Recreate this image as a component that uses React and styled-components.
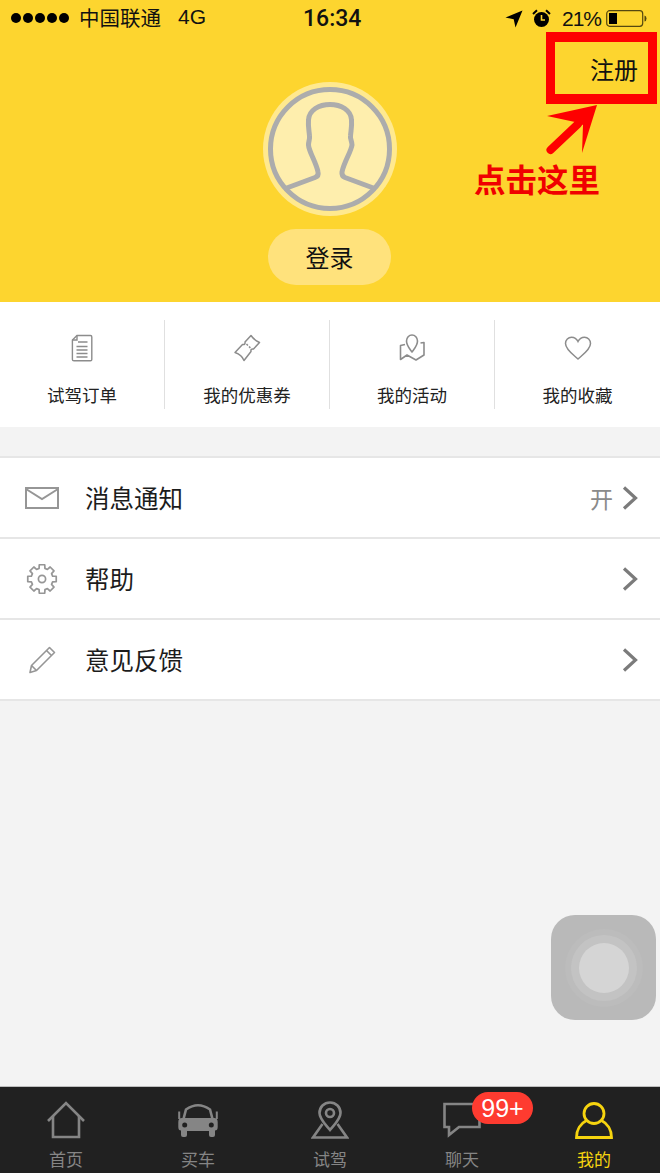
import React from 'react';
import styled, { createGlobalStyle } from 'styled-components';

const GlobalStyle = createGlobalStyle`
  html, body {
    margin: 0;
    padding: 0;
    background: #f3f3f3;
    font-family: "Liberation Sans", "Noto Sans CJK SC", sans-serif;
  }
`;

const Page = styled.div`
  position: relative;
  width: 660px;
  height: 1173px;
  display: flex;
  flex-direction: column;
  overflow: hidden;
  background: #f3f3f3;
`;

const Hero = styled.header`
  height: 302px;
  flex: none;
  background: #fdd52f;
  display: flex;
  flex-direction: column;
  align-items: center;
`;

const StatusBar = styled.div`
  align-self: stretch;
  height: 37px;
  display: grid;
  grid-template-columns: 292px auto 1fr;
  align-items: center;
  padding: 0 13px 0 11px;
  color: #111;
  font-size: 21px;
`;

const StatusLeft = styled.div`
  display: flex;
  align-items: center;
  margin-top: -3px;
`;

const Dots = styled.div`
  display: flex;
  gap: 2px;
  margin: 2px 10px 0 0;
`;

const Dot = styled.span`
  width: 10px;
  height: 10px;
  border-radius: 50%;
  background: #000;
`;

const Carrier = styled.span`
  font-size: 20.5px;
  margin-right: 17px;
`;

const Clock = styled.div`
  font-family: Roboto, "Liberation Sans", sans-serif;
  font-size: 23px;
  font-weight: 500;
`;

const StatusRight = styled.div`
  display: flex;
  align-items: center;
  justify-content: flex-end;
`;

const Percent = styled.span`
  margin: 0 5px 0 11px;
  letter-spacing: -1px;
`;

const NavRow = styled.div`
  align-self: stretch;
  height: 45px;
  display: flex;
  justify-content: flex-end;
  padding: 19px 22px 0 0;
  box-sizing: border-box;
`;

const RegisterLink = styled.span`
  font-size: 24px;
  line-height: 30px;
  color: #111;
`;

const Avatar = styled.div`
  width: 134px;
  height: 134px;
  flex: none;
`;

const LoginButton = styled.div`
  width: 123px;
  height: 56px;
  margin: 13px 1px 0 0;
  padding-bottom: 2px;
  box-sizing: border-box;
  border-radius: 28px;
  background: #ffe27c;
  color: #111;
  font-size: 24px;
  display: flex;
  align-items: center;
  justify-content: center;
`;

const Shortcuts = styled.nav`
  height: 125px;
  flex: none;
  background: #fff;
  display: grid;
  grid-template-columns: repeat(4, 1fr);
  align-items: start;
  padding-top: 18px;
  box-sizing: border-box;
`;

const Shortcut = styled.div`
  height: 89px;
  display: flex;
  flex-direction: column;
  align-items: center;
  padding-top: 14px;
  box-sizing: border-box;
  border-right: ${p => (p.$last ? 'none' : '1px solid #e0e0e0')};
`;

const ShortcutIcon = styled.div`
  height: 28px;
  display: flex;
  align-items: center;
  justify-content: center;
`;

const ShortcutLabel = styled.span`
  margin-top: 22px;
  font-size: 17.5px;
  line-height: 24px;
  color: #222;
`;

const Menu = styled.section`
  margin-top: 29px;
  background: #fff;
  border-top: 2px solid #e6e6e6;
`;

const MenuRow = styled.div`
  height: 79px;
  display: flex;
  align-items: center;
  padding: 0 22px 0 25px;
  border-bottom: 2px solid #e6e6e6;
`;

const MenuIcon = styled.div`
  width: 34px;
  margin-right: 26px;
  display: flex;
  align-items: center;
  justify-content: center;
`;

const MenuLabel = styled.span`
  flex: 1;
  font-size: 24.5px;
  color: #1c1c1c;
`;

const MenuValue = styled.span`
  font-size: 23px;
  color: #8a8a8a;
  margin-right: 9px;
`;

const Spacer = styled.div`
  flex: 1;
`;

const TabBar = styled.footer`
  height: 87px;
  flex: none;
  background: #212121;
  border-top: 1px solid #bdbdbd;
  box-sizing: border-box;
  display: grid;
  grid-template-columns: repeat(5, 1fr);
  overflow: hidden;
`;

const Tab = styled.div`
  position: relative;
  display: flex;
  flex-direction: column;
  align-items: center;
  padding-top: 14px;
  color: ${p => (p.$active ? '#f6d40f' : '#858585')};
`;

const TabIcon = styled.div`
  height: 38px;
  display: flex;
  align-items: center;
  justify-content: center;
`;

const TabLabel = styled.span`
  margin-top: 9px;
  font-size: 17px;
  line-height: 26px;
`;

const Badge = styled.span`
  position: absolute;
  left: 76px;
  top: 5px;
  width: 61px;
  height: 32px;
  border-radius: 16px;
  background: #fe3b30;
  color: #fff;
  font-size: 25px;
  display: flex;
  align-items: center;
  justify-content: center;
`;

const RedBox = styled.div`
  position: absolute;
  left: 546px;
  top: 32px;
  width: 111px;
  height: 72px;
  box-sizing: border-box;
  border-style: solid;
  border-color: #fe0000;
  border-width: 10px 9px;
`;

const ArrowMark = styled.svg`
  position: absolute;
  left: 540px;
  top: 100px;
`;

const ClickHint = styled.span`
  position: absolute;
  left: 474px;
  top: 161px;
  font-size: 31.5px;
  line-height: 40px;
  font-weight: 700;
  color: #f00000;
  white-space: nowrap;
`;

const AssistiveTouch = styled.div`
  position: absolute;
  left: 551px;
  top: 915px;
  width: 105px;
  height: 105px;
  border-radius: 24px;
  background: #b9b9b9;
  display: flex;
  align-items: center;
  justify-content: center;
`;

const Ring = styled.div`
  width: ${p => p.$size}px;
  height: ${p => p.$size}px;
  border-radius: 50%;
  background: ${p => p.$color};
  display: flex;
  align-items: center;
  justify-content: center;
`;

const gray = '#8c8c8c';

// blocky 8 tooth gear, same shape as the one in the help row
function gearPath(cx, cy, inner, outer) {
  const pts = [];
  for (let i = 0; i < 8; i++) {
    const a = (i * Math.PI) / 4 - Math.PI / 2;
    [[inner, -0.27], [outer, -0.19], [outer, 0.19], [inner, 0.27]].forEach(([r, d]) => {
      pts.push(`${(cx + r * Math.cos(a + d)).toFixed(2)} ${(cy + r * Math.sin(a + d)).toFixed(2)}`);
    });
  }
  return `M${pts.join('L')}Z`;
}

const shortcuts = [
  {
    label: '试驾订单',
    icon: (
      <svg width="22" height="28" viewBox="0 0 22 28" fill="none" stroke={gray} strokeWidth="1.4">
        <path d="M6 1.5H19.5Q20.8 1.5 20.8 3V25.5Q20.8 26.8 19.5 26.8H3Q1.4 26.8 1.4 25.5V6Z" />
        <path d="M6 1.5V6H1.4M7 8H16.5M5.5 12.5H16.5M5.5 16H16.5M5.5 19.5H16.5M5.5 23H16.5" />
      </svg>
    ),
  },
  {
    label: '我的优惠券',
    icon: (
      <svg width="28" height="28" viewBox="0 0 28 28" fill="none" stroke={gray} strokeWidth="1.5" strokeLinejoin="round">
        <path d="M18 1.5Q21 6 26.5 8.5L20.5 15Q17.5 14.5 18 17.5L11 26.5Q9 21 2 18.5L9.5 10.5Q12.5 11 12 8Z" />
        <path d="M13.5 10L18 14.5" strokeDasharray="2 1.5" />
      </svg>
    ),
  },
  {
    label: '我的活动',
    icon: (
      <svg width="30" height="28" viewBox="0 0 30 28" fill="none" stroke={gray} strokeWidth="1.6" strokeLinejoin="round">
        <path d="M15 18C12.5 14.5 9.5 11.5 9.5 7C9.5 3.5 12 1 15 1C18 1 20.5 3.5 20.5 7C20.5 11.5 17.5 14.5 15 18Z" />
        <path d="M8 10.5L3.5 11.5V25.5L10 21L19 26L27 21V8.5L23.5 9" />
      </svg>
    ),
  },
  {
    label: '我的收藏',
    icon: (
      <svg width="28" height="24" viewBox="0 0 28 24" fill="none" stroke={gray} strokeWidth="1.5">
        <path d="M14 23C9 18.5 1.5 13.5 1.5 7.5C1.5 3.8 4.3 1.2 7.5 1.2C10.3 1.2 12.8 3 14 5.5C15.2 3 17.7 1.2 20.5 1.2C23.7 1.2 26.5 3.8 26.5 7.5C26.5 13.5 19 18.5 14 23Z" />
      </svg>
    ),
  },
];

const Chevron = () => (
  <svg width="16" height="24" viewBox="0 0 16 24" fill="none" stroke="#7b7b7b" strokeWidth="3.2">
    <path d="M2 1.5L13.5 12L2 22.5" />
  </svg>
);

const menuItems = [
  {
    label: '消息通知',
    value: '开',
    icon: (
      <svg width="34" height="22" viewBox="0 0 34 22" fill="none" stroke="#969696" strokeWidth="2">
        <rect x="1" y="1" width="32" height="20" />
        <path d="M1 2L17 12L33 2" />
      </svg>
    ),
  },
  {
    label: '帮助',
    icon: (
      <svg width="32" height="32" viewBox="0 0 32 32" fill="none" stroke="#969696" strokeWidth="1.7" strokeLinejoin="round">
        <path d={gearPath(16, 16, 11, 14.5)} />
        <circle cx="16" cy="16" r="3.6" />
      </svg>
    ),
  },
  {
    label: '意见反馈',
    icon: (
      <svg width="28" height="28" viewBox="0 0 28 28" fill="none" stroke="#969696" strokeWidth="1.6" strokeLinejoin="round">
        <path d="M21.5 1.5L26.5 6.5L8.5 24.5L2 26.5L3.5 19.5Z" />
        <path d="M18.5 4.5L23.5 9.5M3.5 19.5L8.5 24.5" />
      </svg>
    ),
  },
];

const tabs = [
  {
    label: '首页',
    icon: (
      <svg width="40" height="38" viewBox="0 0 40 38" fill="none" stroke="currentColor" strokeWidth="2.6">
        <path d="M2 20L20 2L38 20" />
        <path d="M7 15V36H33V15" />
      </svg>
    ),
  },
  {
    label: '买车',
    icon: (
      <svg width="42" height="36" viewBox="0 0 42 36" fill="none">
        <path d="M6.5 17L9 7.5Q21 -1 33 7.5L35.5 17" stroke="currentColor" strokeWidth="2.6" />
        <path d="M2.2 9.5V17M39.8 9.5V17" stroke="currentColor" strokeWidth="2" />
        <path d="M1.3 20Q1.3 16 5 16H37Q40.7 16 40.7 20V25Q40.7 28.5 38 28.5V33Q38 35 36 35H34Q32 35 32 33V29H10V33Q10 35 8 35H6Q4 35 4 33V28.5Q1.3 28.5 1.3 25Z" fill="currentColor" />
        <circle cx="7.7" cy="23" r="2.5" fill="#212121" />
        <circle cx="34.3" cy="23" r="2.5" fill="#212121" />
      </svg>
    ),
  },
  {
    label: '试驾',
    icon: (
      <svg width="38" height="38" viewBox="0 0 38 38" fill="none" stroke="currentColor" strokeWidth="2.6">
        <path d="M19 29C14 23 8.5 18 8.5 12C8.5 6 13 1.5 19 1.5C25 1.5 29.5 6 29.5 12C29.5 18 24 23 19 29Z" />
        <circle cx="19" cy="12" r="4" />
        <path d="M11.5 23L2 36.5H36L26.5 23" />
      </svg>
    ),
  },
  {
    label: '聊天',
    badge: '99+',
    icon: (
      <svg width="38" height="36" viewBox="0 0 38 36" fill="none" stroke="currentColor" strokeWidth="2.6">
        <path d="M1.5 2H36.5V25H16L6 33V25H1.5Z" />
      </svg>
    ),
  },
  {
    label: '我的',
    active: true,
    icon: (
      <svg width="38" height="37" viewBox="0 0 38 37" fill="none" stroke="currentColor" strokeWidth="2.8">
        <circle cx="19" cy="11.5" r="10" />
        <path d="M11.5 18.5C5.5 21.5 1.5 28 1.5 35.5H36.5C36.5 28 32.5 21.5 26.5 18.5" />
      </svg>
    ),
  },
];

function StatusIcons() {
  return (
    <>
      <svg width="18" height="18" viewBox="0 0 18 18" style={{ marginRight: 9 }}>
        <path d="M17.5 0.5L10.5 17.5L8.7 9.3L0.5 7.5Z" fill="#000" />
      </svg>
      <svg width="19" height="19" viewBox="0 0 19 19">
        <circle cx="9.5" cy="10.5" r="7.5" fill="#000" />
        <path d="M9.5 6V11H13" fill="none" stroke="#fdd52f" strokeWidth="1.6" />
        <path d="M1 5L5 1.2M18 5L14 1.2" stroke="#000" strokeWidth="2" />
      </svg>
    </>
  );
}

function Battery() {
  return (
    <svg width="41" height="17" viewBox="0 0 41 17">
      <rect x="0.7" y="0.7" width="36" height="15.6" rx="3" fill="none" stroke="#55480f" strokeWidth="1.2" />
      <rect x="3" y="3" width="8" height="11" fill="#000" />
      <path d="M38.5 5.5Q40.5 6 40.5 8.5Q40.5 11 38.5 11.5Z" fill="#55480f" />
    </svg>
  );
}

function AvatarArt() {
  return (
    <svg width="134" height="134" viewBox="0 0 134 134" fill="none">
      <circle cx="67" cy="67" r="67" fill="#ffe98f" />
      <circle cx="67" cy="67" r="59.5" fill="#feeead" stroke="#acacac" strokeWidth="5" />
      <path
        d="M21 107L52 95.5Q56 94 55 90C53 80 46 70 45.5 63C45.5 59 47 57 46.5 54C46 48 45 44 45.5 38C46 28 56 22.5 67 22.5C78 22.5 88 28 88.5 38C89 44 88 48 87.5 54C87 57 89 59 89 63C88 70 81 80 79 90Q78.5 94 82 95.5L113 107"
        stroke="#acacac"
        strokeWidth="5"
        strokeLinejoin="round"
      />
    </svg>
  );
}

export default function App() {
  return (
    <Page>
      <GlobalStyle />
      <Hero>
        <StatusBar>
          <StatusLeft>
            <Dots>
              {[0, 1, 2, 3, 4].map(i => <Dot key={i} />)}
            </Dots>
            <Carrier>中国联通</Carrier>
            <span>4G</span>
          </StatusLeft>
          <Clock>16:34</Clock>
          <StatusRight>
            <StatusIcons />
            <Percent>21%</Percent>
            <Battery />
          </StatusRight>
        </StatusBar>
        <NavRow>
          <RegisterLink>注册</RegisterLink>
        </NavRow>
        <Avatar>
          <AvatarArt />
        </Avatar>
        <LoginButton>登录</LoginButton>
      </Hero>

      <Shortcuts>
        {shortcuts.map((item, i) => (
          <Shortcut key={item.label} $last={i === shortcuts.length - 1}>
            <ShortcutIcon>{item.icon}</ShortcutIcon>
            <ShortcutLabel>{item.label}</ShortcutLabel>
          </Shortcut>
        ))}
      </Shortcuts>

      <Menu>
        {menuItems.map(item => (
          <MenuRow key={item.label}>
            <MenuIcon>{item.icon}</MenuIcon>
            <MenuLabel>{item.label}</MenuLabel>
            {item.value && <MenuValue>{item.value}</MenuValue>}
            <Chevron />
          </MenuRow>
        ))}
      </Menu>

      <Spacer />

      <TabBar>
        {tabs.map(tab => (
          <Tab key={tab.label} $active={tab.active}>
            <TabIcon>{tab.icon}</TabIcon>
            <TabLabel>{tab.label}</TabLabel>
            {tab.badge && <Badge>{tab.badge}</Badge>}
          </Tab>
        ))}
      </TabBar>

      <RedBox />
      <ArrowMark width="64" height="60" viewBox="0 0 64 60">
        <path d="M57 5L7 16L35 22L43 25L42 53Z" fill="#fe0000" />
        <path d="M38 24L10.5 50" stroke="#fe0000" strokeWidth="8" strokeLinecap="round" />
      </ArrowMark>
      <ClickHint>点击这里</ClickHint>

      <AssistiveTouch>
        <Ring $size={78} $color="#bcbcbc">
          <Ring $size={66} $color="#c3c3c3">
            <Ring $size={50} $color="#d5d5d5" />
          </Ring>
        </Ring>
      </AssistiveTouch>
    </Page>
  );
}
